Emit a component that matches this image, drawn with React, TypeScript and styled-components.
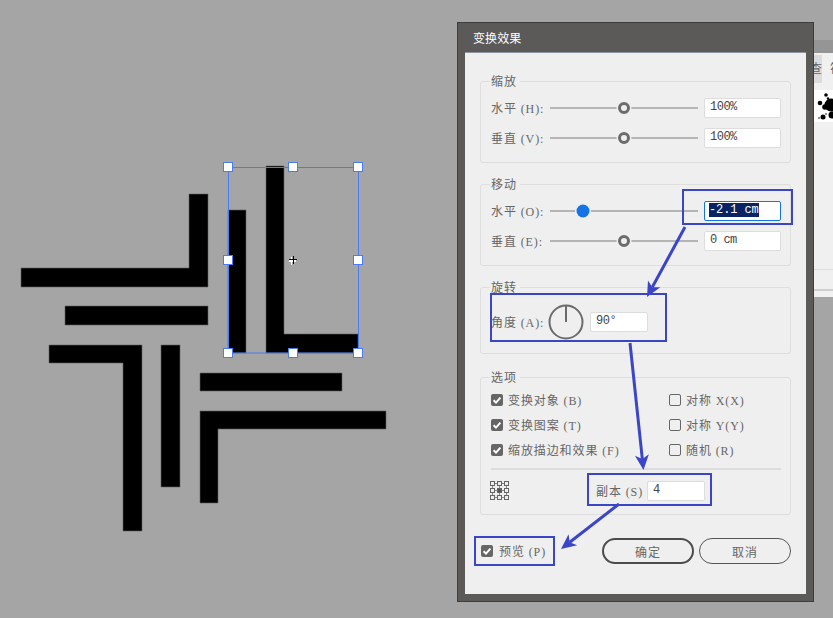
import React from "react";
import styled, { createGlobalStyle } from "styled-components";

const GlobalStyle = createGlobalStyle`
  html, body {
    margin: 0;
    padding: 0;
    background: #a5a5a5;
    overflow: hidden;
  }
`;

const labelFont = `"Liberation Serif", "Noto Sans CJK SC", serif`;
const monoFont = `"Liberation Mono", "Noto Sans CJK SC", monospace`;
const accent = "#3b45c8";

const Canvas = styled.div`
  position: relative;
  width: 833px;
  height: 618px;
  background: #a5a5a5;
  overflow: hidden;
`;

const ArtLayer = styled.svg`
  position: absolute;
  left: 0;
  top: 0;
`;

/* panel peeking out behind the dialog */
const SidePanel = styled.div`
  position: absolute;
  left: 814px;
  top: 53px;
  width: 19px;
  height: 244px;
  background: #f0f0f0;
  overflow: hidden;
  display: flex;
  flex-direction: column;
`;

const TopStrip = styled.div`
  position: absolute;
  left: 814px;
  top: 40px;
  width: 19px;
  height: 13px;
  background: #959595;
`;

const PanelTabs = styled.div`
  display: flex;
  height: 28px;
  margin-top: 2px;
  flex: none;
`;

const PanelTab = styled.div<{ $active?: boolean }>`
  flex: none;
  width: ${({ $active }) => ($active ? "8px" : "11px")};
  background: ${({ $active }) => ($active ? "#dcdcdc" : "transparent")};
  font: 12px ${labelFont};
  color: #666;
  line-height: 28px;
  overflow: hidden;
  white-space: nowrap;
  direction: ${({ $active }) => ($active ? "rtl" : "ltr")};
  padding-left: ${({ $active }) => ($active ? "0" : "8px")};
  box-sizing: border-box;
`;

const SwatchBox = styled.div`
  margin-top: 7px;
  height: 32px;
  background: #fff;
  flex: none;
`;

const PanelLine = styled.div<{ $gap: number; $size: number }>`
  flex: none;
  margin-top: ${({ $gap }) => $gap}px;
  height: ${({ $size }) => $size}px;
  background: ${({ $size }) => ($size > 1 ? "#cfcfcf" : "#dddddd")};
`;

const Dialog = styled.div`
  position: absolute;
  left: 457px;
  top: 22px;
  width: 357px;
  height: 580px;
  box-sizing: border-box;
  border: 1px solid #3d3d3d;
  background: #5b5a58;
  display: flex;
  flex-direction: column;
`;

const TitleBar = styled.div`
  height: 29px;
  flex: none;
  padding-left: 15px;
  font: 12px/29px "Noto Sans CJK SC", sans-serif;
  letter-spacing: 0.1px;
  color: #fff;
`;

const DialogBody = styled.div`
  margin: 0 7px;
  width: 341px;
  height: 542px;
  box-sizing: border-box;
  padding: 28px 15px 0;
  background: #efefef;
  border-top: 1px solid #8d93a0;
  display: flex;
  flex-direction: column;
`;

const Group = styled.section<{ $gap?: number; $pad?: number; $height: number }>`
  position: relative;
  box-sizing: border-box;
  height: ${({ $height }) => $height}px;
  margin-top: ${({ $gap }) => $gap ?? 0}px;
  padding: ${({ $pad }) => $pad ?? 16}px 9px 0 10px;
  border: 1px solid #dedede;
  border-radius: 3px;
  display: flex;
  flex-direction: column;
`;

const GroupTitle = styled.span`
  position: absolute;
  left: 9px;
  top: -8px;
  padding: 0 3px 0 1px;
  background: #efefef;
  font: 12px/16px ${labelFont};
  letter-spacing: 1px;
  color: #666;
`;

const SliderRow = styled.div`
  display: flex;
  align-items: center;
  height: 20px;
  & + & {
    margin-top: 10px;
  }
`;

const RowLabel = styled.span<{ $width?: number }>`
  flex: none;
  width: ${({ $width }) => $width ?? 59}px;
  padding-top: 2px;
  font: 12px/20px ${labelFont};
  letter-spacing: 0.9px;
  color: #666;
  white-space: nowrap;
`;

const SliderTrack = styled.div`
  position: relative;
  flex: none;
  width: 148px;
  height: 2px;
  margin-right: 6px;
  background: #b5b5b5;
`;

const SliderKnob = styled.div<{ $pos: number; $active?: boolean }>`
  position: absolute;
  left: ${({ $pos }) => $pos}px;
  top: 1px;
  box-sizing: border-box;
  width: ${({ $active }) => ($active ? 13 : 12)}px;
  height: ${({ $active }) => ($active ? 13 : 12)}px;
  transform: translate(-50%, -50%);
  border-radius: 50%;
  border: ${({ $active }) => ($active ? "none" : "3px solid #6b6b6b")};
  background: ${({ $active }) => ($active ? "#1473e6" : "#efefef")};
  box-shadow: 0 0 0 1.5px #efefef;
`;

const Field = styled.div<{ $width: number; $focus?: boolean }>`
  flex: none;
  box-sizing: border-box;
  width: ${({ $width }) => $width}px;
  height: 20px;
  padding-left: 5px;
  background: #fff;
  border: 1px solid ${({ $focus }) => ($focus ? "#1473e6" : "#dddddd")};
  border-radius: 2px;
  font: 12px/16px ${monoFont};
  letter-spacing: -0.5px;
  color: #444;
  white-space: nowrap;
`;

const Selected = styled.span`
  margin-left: -1px;
  background: #0a2463;
  color: #fff;
  letter-spacing: -0.1px;
`;

const AngleRow = styled.div`
  display: flex;
  align-items: center;
  height: 34px;
`;

const AngleDial = styled.svg`
  flex: none;
  margin: 0 6px 0 -2px;
`;

const OptionsGrid = styled.div`
  display: grid;
  grid-template-columns: 178px 1fr;
  row-gap: 9px;
`;

const CheckRow = styled.div`
  display: flex;
  align-items: center;
  gap: 5px;
  height: 16px;
  font: 12px/16px ${labelFont};
  letter-spacing: 0.9px;
  color: #666;
  white-space: nowrap;
`;

const CheckText = styled.span`
  padding-top: 2px;
`;

const CheckBox = styled.span<{ $checked?: boolean }>`
  flex: none;
  box-sizing: border-box;
  width: 12px;
  height: 12px;
  border-radius: 2px;
  display: inline-flex;
  background: ${({ $checked }) => ($checked ? "#666" : "transparent")};
  border: ${({ $checked }) => ($checked ? "none" : "1px solid #666")};
`;

const Divider = styled.div`
  height: 2px;
  margin: 10px 0;
  background: #dddddd;
`;

const CopiesRow = styled.div`
  display: flex;
  align-items: center;
  height: 21px;
  margin-left: -1px;
`;

const CopiesLabel = styled(RowLabel)`
  margin-left: 87px;
`;

const Footer = styled.div`
  display: flex;
  align-items: center;
  margin-top: 23px;
  padding-left: 1px;
  height: 26px;
`;

const PreviewCheck = styled(CheckRow)`
  gap: 6px;
  width: 121px;
`;

const Button = styled.div<{ $primary?: boolean }>`
  box-sizing: border-box;
  width: 92px;
  height: 26px;
  margin-right: 5px;
  border-radius: 13px;
  border: ${({ $primary }) => ($primary ? "2px solid #4c4c4c" : "1px solid #555")};
  display: flex;
  align-items: center;
  justify-content: center;
  font: 12px "Noto Sans CJK SC", sans-serif;
  letter-spacing: 1px;
  color: #666;
  &:last-child {
    margin-right: 0;
  }
`;

/* tutorial callouts drawn over the dialog */
const Callout = styled.div<{ $x: number; $y: number; $w: number; $h: number }>`
  position: absolute;
  left: ${({ $x }) => $x}px;
  top: ${({ $y }) => $y}px;
  width: ${({ $w }) => $w}px;
  height: ${({ $h }) => $h}px;
  box-sizing: border-box;
  border: 2px solid ${accent};
  pointer-events: none;
`;

const Check = () => (
  <svg width="12" height="12" viewBox="0 0 12 12">
    <path d="M2.6 6.2 L5 8.6 L9.4 3.6" fill="none" stroke="#fff" strokeWidth="2" />
  </svg>
);

const Option = ({ checked, children }: { checked?: boolean; children: React.ReactNode }) => (
  <CheckRow>
    <CheckBox $checked={checked}>{checked && <Check />}</CheckBox>
    <CheckText>{children}</CheckText>
  </CheckRow>
);

const artwork = [
  "M21 268H189V194H208V287H21Z",
  "M65 306H208V325H65Z",
  "M49 345H142V531H123V363H49Z",
  "M161 345H180V487H161Z",
  "M200 373H342V391H200Z",
  "M200 411H386V429H218V503H200Z",
  "M228 210H246V353H228Z",
  "M266 166H284V334H358V353H266Z",
];

const handles = [
  [228, 167],
  [293, 167],
  [358, 167],
  [228, 260],
  [358, 260],
  [228, 353],
  [293, 353],
  [358, 353],
];

const arrows = [
  [685, 227, 647, 297],
  [630, 343, 643.5, 470],
  [619, 504, 561, 549],
];

const Arrow = ({ from }: { from: number[] }) => {
  const [x1, y1, x2, y2] = from;
  const len = Math.hypot(x2 - x1, y2 - y1);
  const ux = (x2 - x1) / len;
  const uy = (y2 - y1) / len;
  const bx = x2 - ux * 15;
  const by = y2 - uy * 15;
  const nx = x2 - ux * 11;
  const ny = y2 - uy * 11;
  const head = `${x2},${y2} ${bx - uy * 7},${by + ux * 7} ${nx},${ny} ${bx + uy * 7},${by - ux * 7}`;
  return (
    <g>
      <line x1={x1} y1={y1} x2={nx} y2={ny} stroke={accent} strokeWidth="3" />
      <polygon points={head} fill={accent} />
    </g>
  );
};

const gridCells = [0.5, 7.5, 14.5];

export default function App() {
  return (
    <Canvas>
      <GlobalStyle />
      <ArtLayer width="833" height="618">
        {artwork.map((d) => (
          <path key={d} d={d} fill="#000" stroke="#5f5f5f" strokeWidth="0.6" />
        ))}
        <rect x="228.5" y="167.5" width="130" height="185.5" fill="none" stroke="#4a7bf0" strokeWidth="1" />
        {handles.map(([x, y]) => (
          <rect
            key={`${x}-${y}`}
            x={x - 4.5}
            y={y - 4.5}
            width="9"
            height="9"
            fill="#fff"
            stroke="#4a7bf0"
            strokeWidth="1"
          />
        ))}
        <path d="M291 257h1v8h-1zM289 260h7v2h-7z" fill="#fff" />
        <path d="M293.5 256v8M289 259.500h8" stroke="#000" strokeWidth="1" />
      </ArtLayer>

      <TopStrip />
      <SidePanel>
        <PanelTabs>
          <PanelTab $active>查</PanelTab>
          <PanelTab>符</PanelTab>
        </PanelTabs>
        <SwatchBox>
          <svg width="19" height="32" viewBox="0 0 19 32">
            <circle cx="12" cy="5" r="1.8" fill="#000" />
            <circle cx="6" cy="13" r="2.3" fill="#000" />
            <circle cx="9" cy="27" r="2.5" fill="#000" />
            <circle cx="17" cy="15" r="6.5" fill="#000" />
            <circle cx="18" cy="25" r="3.5" fill="#000" />
            <circle cx="11" cy="17" r="2.8" fill="#000" />
            <circle cx="14" cy="8.5" r="1.2" fill="#000" />
            <circle cx="12" cy="24" r="0.8" fill="#000" />
            <circle cx="5" cy="28" r="0.8" fill="#000" />
          </svg>
        </SwatchBox>
        <PanelLine $gap={147} $size={1} />
        <PanelLine $gap={19} $size={2} />
      </SidePanel>

      <Dialog>
        <TitleBar>变换效果</TitleBar>
        <DialogBody>
          <Group $height={82}>
            <GroupTitle>缩放</GroupTitle>
            <SliderRow>
              <RowLabel>水平 (H):</RowLabel>
              <SliderTrack>
                <SliderKnob $pos={74} />
              </SliderTrack>
              <Field $width={77}>100%</Field>
            </SliderRow>
            <SliderRow>
              <RowLabel>垂直 (V):</RowLabel>
              <SliderTrack>
                <SliderKnob $pos={74} />
              </SliderTrack>
              <Field $width={77}>100%</Field>
            </SliderRow>
          </Group>

          <Group $gap={21} $height={82}>
            <GroupTitle>移动</GroupTitle>
            <SliderRow>
              <RowLabel>水平 (O):</RowLabel>
              <SliderTrack>
                <SliderKnob $pos={33} $active />
              </SliderTrack>
              <Field $width={77} $focus>
                <Selected>-2.1 cm</Selected>
              </Field>
            </SliderRow>
            <SliderRow>
              <RowLabel>垂直 (E):</RowLabel>
              <SliderTrack>
                <SliderKnob $pos={74} />
              </SliderTrack>
              <Field $width={77}>0 cm</Field>
            </SliderRow>
          </Group>

          <Group $gap={21} $pad={17} $height={67}>
            <GroupTitle>旋转</GroupTitle>
            <AngleRow>
              <RowLabel>角度 (A):</RowLabel>
              <AngleDial width="36" height="36" viewBox="0 0 36 36">
                <circle cx="18" cy="18" r="16.5" fill="none" stroke="#6b6b6b" strokeWidth="2" />
                <line x1="18" y1="2" x2="18" y2="18" stroke="#6b6b6b" strokeWidth="2" />
              </AngleDial>
              <Field $width={58}>90°</Field>
            </AngleRow>
          </Group>

          <Group $gap={23} $pad={14} $height={138}>
            <GroupTitle>选项</GroupTitle>
            <OptionsGrid>
              <Option checked>变换对象 (B)</Option>
              <Option>对称 X(X)</Option>
              <Option checked>变换图案 (T)</Option>
              <Option>对称 Y(Y)</Option>
              <Option checked>缩放描边和效果 (F)</Option>
              <Option>随机 (R)</Option>
            </OptionsGrid>
            <Divider />
            <CopiesRow>
              <svg width="19" height="19" viewBox="0 0 19 19" style={{ flex: "none" }}>
                <path
                  d="M4.500 2.500h3M11.500 2.500h3M4.500 9.500h3M11.500 9.500h3M4.500 16.500h3M11.500 16.500h3M2.500 4.500v3M9.500 4.500v3M16.500 4.500v3M2.500 11.500v3M9.500 11.500v3M16.500 11.500v3"
                  stroke="#888"
                  strokeWidth="1"
                />
                {gridCells.map((y) =>
                  gridCells.map((x) => (
                    <rect
                      key={`${x}-${y}`}
                      x={x}
                      y={y}
                      width="4"
                      height="4"
                      fill={x === 7.5 && y === 7.5 ? "#555" : "none"}
                      stroke="#666"
                      strokeWidth="1"
                    />
                  )),
                )}
              </svg>
              <CopiesLabel $width={51}>副本 (S)</CopiesLabel>
              <Field $width={58}>4</Field>
            </CopiesRow>
          </Group>

          <Footer>
            <PreviewCheck>
              <CheckBox $checked>
                <Check />
              </CheckBox>
              <CheckText>预览 (P)</CheckText>
            </PreviewCheck>
            <Button $primary>确定</Button>
            <Button>取消</Button>
          </Footer>
        </DialogBody>
      </Dialog>

      <ArtLayer width="833" height="618">
        {arrows.map((a) => (
          <Arrow key={a[0]} from={a} />
        ))}
      </ArtLayer>
      <Callout $x={682} $y={189} $w={111} $h={36} />
      <Callout $x={490} $y={293} $w={177} $h={49} />
      <Callout $x={587} $y={473} $w={125} $h={33} />
      <Callout $x={474} $y={536} $w={81} $h={30} />
    </Canvas>
  );
}
